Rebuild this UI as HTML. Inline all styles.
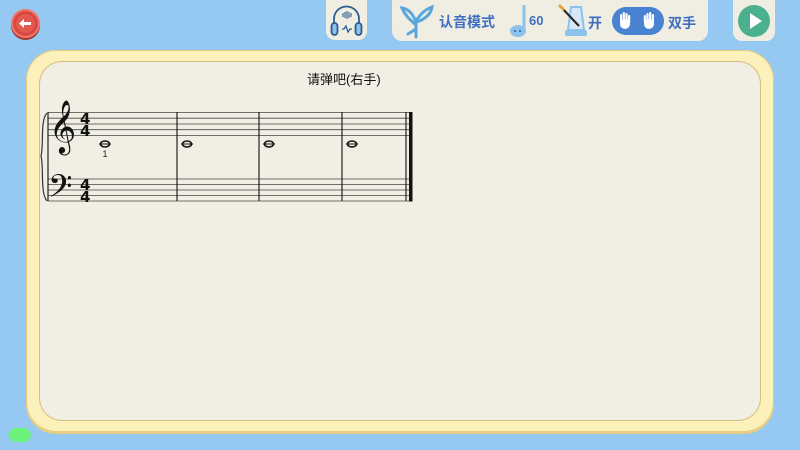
<!DOCTYPE html>
<html><head><meta charset="utf-8"><style>
body{margin:0;width:800px;height:450px;overflow:hidden;background:#95c9f1;position:relative;font-family:"Liberation Sans","Noto Sans CJK SC",sans-serif}
.abs{position:absolute}
</style></head><body>
<!-- back button -->
<div class="abs" style="left:11px;top:9px;width:29px;height:29px;border-radius:50%;background:#d9473f;box-shadow:0 2px 0 #a53630, inset 0 0 0 2px #f07a6f"></div>
<div class="abs" style="left:16px;top:14px;width:19px;height:19px;border-radius:50%;background:#e25a4f"></div>
<svg class="abs" style="left:16px;top:16px" width="19" height="15"><path d="M3 7.5 L8 3 V6 H15 V9 H8 V12 Z" fill="#fff"/></svg>
<!-- headphone box -->
<div class="abs" style="left:326px;top:-8px;width:41px;height:48px;border-radius:9px;background:#f0eee2"></div>
<svg class="abs" style="left:328px;top:3px" width="37" height="36" fill="none" stroke="#2e5d94" stroke-width="1.8">
<path d="M6 22 V16 A12.5 12.5 0 0 1 31 16 V22"/>
<rect x="3.5" y="20" width="6" height="12" rx="3" fill="#8fc1ea"/><rect x="27.5" y="20" width="6" height="12" rx="3" fill="#8fc1ea"/>
<path d="M14 26 H16 L18 23 L20 29 L22 26 H24" stroke-width="1.3"/>
<path d="M15 10v4M17 9v6M19 8v8M21 9v6M23 10v4" stroke-width="1.1"/></svg>
<!-- toolbar -->
<div class="abs" style="left:392px;top:-10px;width:316px;height:51px;border-radius:10px;background:#f0eee2"></div>
<svg class="abs" style="left:399px;top:3px" width="36" height="36" fill="none" stroke="#5aa7de" stroke-width="3" stroke-linecap="round">
<path d="M17 34 V20 M17 22 C10 16 6 12 3 5 C10 6 15 12 17 20 M17 18 C22 10 27 6 33 4 C32 11 26 16 18 19 M17 26 L9 31"/></svg>
<div class="abs" style="left:439px;top:12px;font-size:14px;font-weight:bold;color:#3f6ec0">认音模式</div>
<svg class="abs" style="left:507px;top:3px" width="22" height="36"><path d="M17 2 V27" stroke="#8cc3ec" stroke-width="3"/><ellipse cx="11" cy="28" rx="8" ry="6" fill="#8cc3ec"/><circle cx="8" cy="28" r="1" fill="#2e5d94"/><circle cx="13" cy="28" r="1" fill="#2e5d94"/></svg>
<div class="abs" style="left:529px;top:13px;font-size:13px;font-weight:bold;color:#3f6ec0">60</div>
<svg class="abs" style="left:557px;top:2px" width="30" height="38"><path d="M14 5 L24 5 L27 28 L11 28 Z" fill="#d8e6f5" stroke="#8cc3ec" stroke-width="2"/><rect x="8" y="28" width="22" height="6" rx="2" fill="#8cc3ec"/><path d="M3 4 L22 24" stroke="#222" stroke-width="2"/><path d="M2 3 L7 8" stroke="#e8a53a" stroke-width="3"/></svg>
<div class="abs" style="left:588px;top:13px;font-size:14px;font-weight:bold;color:#3f6ec0">开</div>
<div class="abs" style="left:612px;top:7px;width:52px;height:28px;border-radius:14px;background:#4a82d2"></div>
<svg class="abs" style="left:612px;top:7px" width="52" height="28" fill="#fff">
<g transform="translate(13,14)"><ellipse cx="0" cy="3" rx="5" ry="5"/><rect x="-5" y="-7" width="2.2" height="9" rx="1.1"/><rect x="-2.3" y="-9" width="2.2" height="10" rx="1.1"/><rect x="0.4" y="-8" width="2.2" height="9" rx="1.1"/><rect x="3" y="-6" width="2.2" height="8" rx="1.1"/></g>
<g transform="translate(37,14)"><ellipse cx="0" cy="3" rx="5" ry="5"/><rect x="-5.2" y="-6" width="2.2" height="8" rx="1.1"/><rect x="-2.6" y="-8" width="2.2" height="9" rx="1.1"/><rect x="0.1" y="-9" width="2.2" height="10" rx="1.1"/><rect x="2.8" y="-7" width="2.2" height="9" rx="1.1"/></g>
</svg>
<div class="abs" style="left:668px;top:13px;font-size:14px;font-weight:bold;color:#3f6ec0">双手</div>
<!-- play -->
<div class="abs" style="left:733px;top:-8px;width:42px;height:49px;border-radius:9px;background:#f0eee2"></div>
<div class="abs" style="left:738px;top:5px;width:32px;height:32px;border-radius:50%;background:#4bb08d"></div>
<svg class="abs" style="left:738px;top:5px" width="32" height="32"><path d="M12 8 L24 16 L12 24 Z" fill="#fff"/></svg>
<!-- card -->
<div class="abs" style="left:26px;top:50px;width:748px;height:382px;border-radius:30px;background:#fcf0bb;box-shadow:inset 0 0 0 1px #e7c97c, 0 2px 0 #e6cc85"></div>
<div class="abs" style="left:40px;top:62px;width:720px;height:358px;border-radius:22px;background:#f1efe3;box-shadow:0 0 0 1px #d6bd82"></div>
<div class="abs" style="left:307px;top:69px;font-size:13px;color:#111">请弹吧(右手)</div>
<svg class="abs" style="left:0;top:0" width="800" height="450">
<g stroke="#444" stroke-width="0.8">
<path d="M48 112.5H412M48 118.2H412M48 124H412M48 129.7H412M48 135.4H412"/>
<path d="M48 179H412M48 184.5H412M48 190H412M48 195.5H412M48 201H412"/>
</g>
<g stroke="#111" stroke-width="1.1">
<path d="M48 112V201M177 112V201M259 112V201M342 112V201M406 112V201"/>
</g>
<rect x="409" y="112" width="3.5" height="89.5" fill="#111"/>
<path d="M47 113 C40 120 44 145 41 156 C44 167 40 193 47 201" fill="none" stroke="#333" stroke-width="1.2"/>
<text x="49" y="142" font-size="46" font-family="DejaVu Sans" fill="#111">𝄞</text>
<text x="48" y="203" font-size="38" font-family="DejaVu Sans" fill="#111">𝄢</text>
<g font-family="DejaVu Sans" font-weight="bold" font-size="15" fill="#111">
<text x="80" y="124">4</text><text x="80" y="136">4</text>
<text x="80" y="190">4</text><text x="80" y="202">4</text></g>
<g fill="none" stroke="#111">
<path d="M99 144H111M181 144H193M263 144H275M346 144H358" stroke-width="1"/>
<ellipse cx="105" cy="144" rx="4.5" ry="3" stroke-width="1.6"/>
<ellipse cx="187" cy="144" rx="4.5" ry="3" stroke-width="1.6"/>
<ellipse cx="269" cy="144" rx="4.5" ry="3" stroke-width="1.6"/>
<ellipse cx="352" cy="144" rx="4.5" ry="3" stroke-width="1.6"/>
</g>
<text x="102.5" y="157" font-size="9" font-family="Liberation Sans" fill="#222">1</text>
<polygon points="13,434 27,434 32,427 27,420 13,420 8,427" transform="translate(0,8)" fill="#6cf27a"/>
</svg>
</body></html>
